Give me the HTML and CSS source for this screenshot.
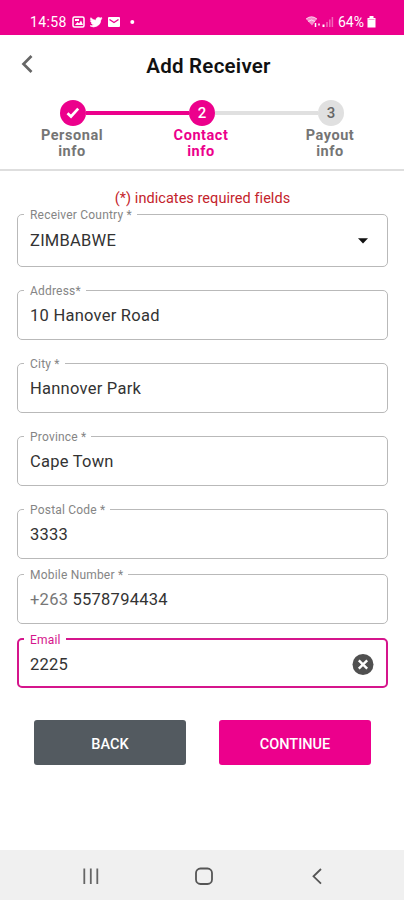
FILE: index.html
```html
<!DOCTYPE html>
<html lang="en">
<head>
<meta charset="utf-8">
<title>Add Receiver</title>
<link rel="stylesheet" href="styles.css">
</head>
<body>
<div class="status">
  <span class="time">14:58</span>
  <svg class="status-left" width="64" height="14" viewBox="0 0 64 14">
    <rect x="1" y="2" width="11" height="10" rx="1.5" fill="none" stroke="#fff" stroke-width="1.5"/>
    <path d="M3 10l2.500-3 1.600 1.500L9 5.500 11 10zM3 4h4v2H3z" fill="#fff"/>
    <path d="M30 3.400c-.5.200-.9.300-1.400.4.500-.3.900-.8 1-1.300-.4.200-1 .5-1.500.6A2.500 2.500 0 0 0 23.900 5.300 7 7 0 0 1 18.800 2.700 2.500 2.500 0 0 0 19.600 6c-.4 0-.8-.1-1.100-.3 0 1.200.8 2.200 2 2.400-.4.100-.7.100-1.100 0 .3 1 1.200 1.700 2.300 1.700A5 5 0 0 1 18 10.800 7 7 0 0 0 28.800 4.900c.5-.4.900-.9 1.200-1.500z" fill="#fff" stroke="#fff" stroke-width=".6"/>
    <rect x="36" y="2" width="12" height="10" rx="1" fill="#fff"/>
    <path d="M37.500 4.500L42 7.500l4.500-3" fill="none" stroke="#ec008c" stroke-width="1.400"/>
    <circle cx="60.300" cy="7" r="2" fill="#fff"/>
  </svg>
  <span class="grow"></span>
  <svg class="signal" width="29" height="14" viewBox="0 0 29 14">
    <path d="M1 4Q6.500-.5 12 4L7 10.500z" fill="#fff" opacity=".55"/>
    <path d="M1 4Q6.500-.5 12 4M3 6.500Q6.500 3.500 10 6.500" fill="none" stroke="#fff" opacity=".7"/>
    <path d="M10.500 8v4M14 8.500v2" stroke="#fff" stroke-width="1.500"/>
    <path d="M18.500 9.500v2.500" stroke="#fff" stroke-width="2"/>
    <path d="M22 7v5M24.800 4.500v7.500M27.400 2v10" stroke="#fff" stroke-width="1.500" opacity=".4"/>
  </svg>
  <span class="percent">64%</span>
  <svg class="battery" width="9" height="12" viewBox="0 0 9 12"><path d="M2.500 0h4v2h2v9.500H.5V2h2z" fill="#fff"/><path d="M1.500 3.500h6" stroke="#ec008c" opacity=".4"/></svg>
</div>
<header class="header">
  <svg class="back-icon" width="14" height="20" viewBox="0 0 14 20"><path d="M11.500 2L3.500 10l8 8" fill="none" stroke="#666" stroke-width="2.700"/></svg>
  <h1>Add Receiver</h1>
</header>
<div class="steps">
  <div class="step">
    <span class="dot"><svg width="14" height="12" viewBox="0 0 14 12"><path d="M1.500 6.200L5 9.500l7.200-7.800" fill="none" stroke="#fff" stroke-width="2.700"/></svg></span>
    <span class="step-name">Personal<br>info</span>
  </div>
  <span class="line line-done"></span>
  <div class="step step-active">
    <span class="dot">2</span>
    <span class="step-name">Contact<br>info</span>
  </div>
  <span class="line"></span>
  <div class="step step-next">
    <span class="dot">3</span>
    <span class="step-name">Payout<br>info</span>
  </div>
</div>
<main class="form">
  <p class="note">(*) indicates required fields</p>
  <fieldset class="field country"><legend>Receiver Country *</legend><div class="value"><span>ZIMBABWE</span><svg class="caret" width="12" height="6" viewBox="0 0 12 6"><path d="M1 .300h10L6 5.500z"/></svg></div></fieldset>
  <fieldset class="field address"><legend>Address*</legend><div class="value"><span>10 Hanover Road</span></div></fieldset>
  <fieldset class="field city"><legend>City *</legend><div class="value"><span>Hannover Park</span></div></fieldset>
  <fieldset class="field province"><legend>Province *</legend><div class="value"><span>Cape Town</span></div></fieldset>
  <fieldset class="field postal"><legend>Postal Code *</legend><div class="value"><span>3333</span></div></fieldset>
  <fieldset class="field mobile"><legend>Mobile Number *</legend><div class="value"><span><span class="prefix">+263</span> 5578794434</span></div></fieldset>
  <fieldset class="field email"><legend>Email</legend><div class="value"><span>2225</span><svg class="clear" width="22" height="22" viewBox="0 0 22 22"><circle cx="11" cy="10.500" r="10.500" fill="#505050"/><path d="M6.800 6.300l8.400 8.400M15.200 6.300l-8.400 8.400" stroke="#fff" stroke-width="2.400"/></svg></div></fieldset>
  <div class="actions">
    <button class="btn btn-back">BACK</button>
    <button class="btn btn-continue">CONTINUE</button>
  </div>
</main>
<nav class="navbar">
  <svg width="18" height="18" viewBox="0 0 18 18"><path d="M2.300 1.500v15.500M8.800 1.500v15.500M15.300 1.500v15.500" stroke="#666" stroke-width="1.800"/></svg>
  <svg width="18" height="18" viewBox="0 0 18 18"><rect x="1" y="1.500" width="16" height="15.500" rx="4.500" fill="none" stroke="#555" stroke-width="1.800"/></svg>
  <svg width="18" height="18" viewBox="0 0 18 18"><path d="M13 2L5.500 9.300l7.500 7.300" fill="none" stroke="#555" stroke-width="1.800"/></svg>
</nav>
</body>
</html>
```

FILE: styles.css
```css
* { box-sizing: border-box; }
body {
  margin: 0;
  width: 404px;
  height: 900px;
  display: flex;
  flex-direction: column;
  overflow: hidden;
  background: #fff;
  color: #333;
  font-family: Roboto, "Liberation Sans", sans-serif;
}
svg { display: block; flex: none; }
.status {
  height: 35px;
  padding: 8px 28px 0 30px;
  display: flex;
  align-items: center;
  background: #ec008c;
  color: #fff;
  font-size: 14px;
}
.time { width: 42px; letter-spacing: .4px; }
.grow { flex: 1; }
.signal { margin-right: 4px; }
.percent { width: 29px; }
.header {
  height: 65px;
  padding: 0 20px;
  display: grid;
  grid-template-columns: 14px 1fr 14px;
  align-items: center;
}
.back-icon { margin-top: -8px; }
h1 {
  margin: -3px 0 0;
  padding-left: 13px;
  text-align: center;
  font-size: 20.500px;
  font-weight: 600;
  letter-spacing: .25px;
  color: #111;
}
.steps {
  height: 71px;
  padding: 0 32px;
  display: flex;
  align-items: flex-start;
  border-bottom: 2px solid #dedede;
}
.step {
  width: 82px;
  flex: none;
  display: flex;
  flex-direction: column;
  align-items: center;
  color: #757575;
}
.dot {
  width: 26px;
  height: 26px;
  border-radius: 50%;
  display: flex;
  align-items: center;
  justify-content: center;
  background: #ec008c;
  color: #fff;
  font-size: 15px;
  font-weight: 500;
}
.step-name {
  margin: 2px 2px 0 0;
  text-align: center;
  font-size: 14.500px;
  line-height: 16px;
  font-weight: 700;
  letter-spacing: .55px;
}
.step-active .step-name { color: #ec008c; }
.step-next .dot { background: #e0e0e0; color: #666; }
.line {
  flex: 1;
  height: 4px;
  margin: 11px -28px 0;
  background: #e0e0e0;
}
.line-done { background: #ec008c; }
.form { flex: 1; padding: 0 16px 0 17px; }
.note {
  margin: 19px 0 -2px;
  height: 18px;
  line-height: 18px;
  text-align: center;
  font-size: 14.500px;
  letter-spacing: .05px;
  color: #c4232b;
}
.field {
  min-width: 0;
  height: 58px;
  margin: 0 0 15px;
  padding: 0 16px 0 6px;
  border: 1px solid #b9b9b9;
  border-radius: 5px;
}
legend {
  height: 16px;
  padding: 2px 5px 0 6px;
  line-height: 14px;
  font-size: 12px;
  letter-spacing: .2px;
  color: #858585;
}
.value {
  height: 35px;
  padding-left: 6px;
  display: flex;
  align-items: center;
  justify-content: space-between;
  font-size: 16.500px;
  letter-spacing: .25px;
}
.country { height: 61px; }
.country .value { height: 37px; }
.caret { margin-right: 2px; fill: #111; }
.postal { margin-bottom: 7px; }
.mobile { margin-bottom: 7px; }
.prefix { color: #777; }
.email {
  height: 57px;
  padding: 0 15px 0 5px;
  border-width: 2px;
  border-color: #d5158c;
}
.email legend { color: #d5158c; }
.clear { margin-right: -3px; }
.actions {
  margin: 32px 17px 0;
  display: flex;
  justify-content: space-between;
}
.btn {
  width: 152px;
  height: 45px;
  padding: 3px 0 0;
  border: 0;
  border-radius: 3px;
  color: #fff;
  font: 500 14.500px Roboto, "Liberation Sans", sans-serif;
}
.btn-back { background: #535a60; }
.btn-continue { background: #ec008c; }
.navbar {
  height: 50px;
  padding: 2px 78px 0 82px;
  display: flex;
  align-items: center;
  justify-content: space-between;
  background: #f0f0f0;
}
```
